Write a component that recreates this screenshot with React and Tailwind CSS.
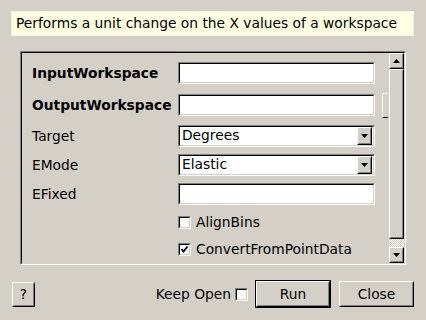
import React from 'react';

function Sunken({ className = '', children }) {
  return (
    <div className={`border border-t-[#808080] border-l-[#808080] border-b-white border-r-white ${className}`}>
      <div className="w-full h-full border border-t-black border-l-black border-b-[#d4d0c8] border-r-[#d4d0c8] bg-white flex items-center">
        {children}
      </div>
    </div>
  );
}

function Raised({ className = '', children }) {
  return (
    <div className={`border border-t-white border-l-white border-b-black border-r-black bg-[#d4d0c8] ${className}`}>
      <div className="w-full h-full border border-t-[#d4d0c8] border-l-[#d4d0c8] border-b-[#808080] border-r-[#808080] flex items-center justify-center">
        {children}
      </div>
    </div>
  );
}

function Arrow({ up }) {
  return (
    <svg width="7" height="4" viewBox="0 0 7 4">
      {up ? <polygon points="3.5,0 7,4 0,4" fill="#000" /> : <polygon points="0,0 7,0 3.5,4" fill="#000" />}
    </svg>
  );
}

function Combo({ value }) {
  return (
    <Sunken className="w-[197px] h-[22px]">
      <span className="pl-[2px] flex-1 leading-none">{value}</span>
      <Raised className="w-[15px] h-[18px] mr-[1px]">
        <Arrow />
      </Raised>
    </Sunken>
  );
}

function Check({ checked }) {
  return (
    <Sunken className="w-[13px] h-[13px]">
      {checked && (
        <svg width="9" height="9" viewBox="0 0 9 9">
          <path d="M1.5 4 L3.5 6.5 L7.5 1.5" stroke="#000" strokeWidth="2" fill="none" />
        </svg>
      )}
    </Sunken>
  );
}

export default function App() {
  const fields = [
    { label: 'InputWorkspace', bold: true, kind: 'text', mt: 'mt-[9px]' },
    { label: 'OutputWorkspace', bold: true, kind: 'text', mt: 'mt-[10px]', extra: true },
    { label: 'Target', kind: 'combo', value: 'Degrees', mt: 'mt-[9px]' },
    { label: 'EMode', kind: 'combo', value: 'Elastic', mt: 'mt-[7px]' },
    { label: 'EFixed', kind: 'text', mt: 'mt-[7px]' },
  ];

  return (
    <div className="w-[426px] h-[320px] bg-[#d4d0c8] text-black text-[13.8px] font-['DejaVu_Sans',sans-serif] flex flex-col overflow-hidden">
      <div className="ml-[11px] mt-[11px] w-[403px] h-[25px] bg-[#ffffe1] border border-[#f2f2e6] flex items-center pl-[4px]">
        Performs a unit change on the X values of a workspace
      </div>

      <div className="ml-[20px] mt-[15px] w-[386px] h-[214px] border border-t-[#808080] border-l-[#808080] border-b-white border-r-white">
        <div className="w-full h-full border border-t-black border-l-black border-b-[#d4d0c8] border-r-[#d4d0c8] flex">
          <div className="flex-1 overflow-hidden flex flex-col">
            {fields.map((f) => (
              <div key={f.label} className={`flex items-center h-[22px] ${f.mt}`}>
                <span className={`w-[156px] pl-[10px] ${f.bold ? 'font-bold' : ''}`}>{f.label}</span>
                {f.kind === 'combo' ? <Combo value={f.value} /> : <Sunken className="w-[197px] h-[22px]" />}
                {f.extra && (
                  <div className="ml-[7px] h-[25px] w-[6px] border-t border-l border-b border-t-white border-l-white border-b-black" />
                )}
              </div>
            ))}
            <div className="flex items-center ml-[156px] mt-[11px] h-[13px] gap-[5px]">
              <Check />
              <span>AlignBins</span>
            </div>
            <div className="flex items-center ml-[156px] mt-[14px] h-[13px] gap-[5px]">
              <Check checked />
              <span>ConvertFromPointData</span>
            </div>
          </div>

          <div className="w-[15px] flex flex-col">
            <Raised className="h-[16px]">
              <Arrow up />
            </Raised>
            <Raised className="h-[170px]" />
            <div className="h-[8px] bg-[repeating-conic-gradient(#ffffff_0_25%,#d4d0c8_0_50%)] bg-[length:2px_2px]" />
            <Raised className="h-[16px]">
              <Arrow />
            </Raised>
          </div>
        </div>
      </div>

      <div className="mt-[15px] px-[12px] flex items-center h-[28px]">
        <Raised className="w-[23px] h-[25px]">
          <span>?</span>
        </Raised>
        <div className="flex-1" />
        <span>Keep Open</span>
        <div className="ml-[4px]">
          <Check />
        </div>
        <div className="ml-[7px] border border-black">
          <Raised className="w-[74px] h-[26px]">
            <span>Run</span>
          </Raised>
        </div>
        <Raised className="ml-[8px] w-[75px] h-[26px]">
          <span>Close</span>
        </Raised>
      </div>
    </div>
  );
}
